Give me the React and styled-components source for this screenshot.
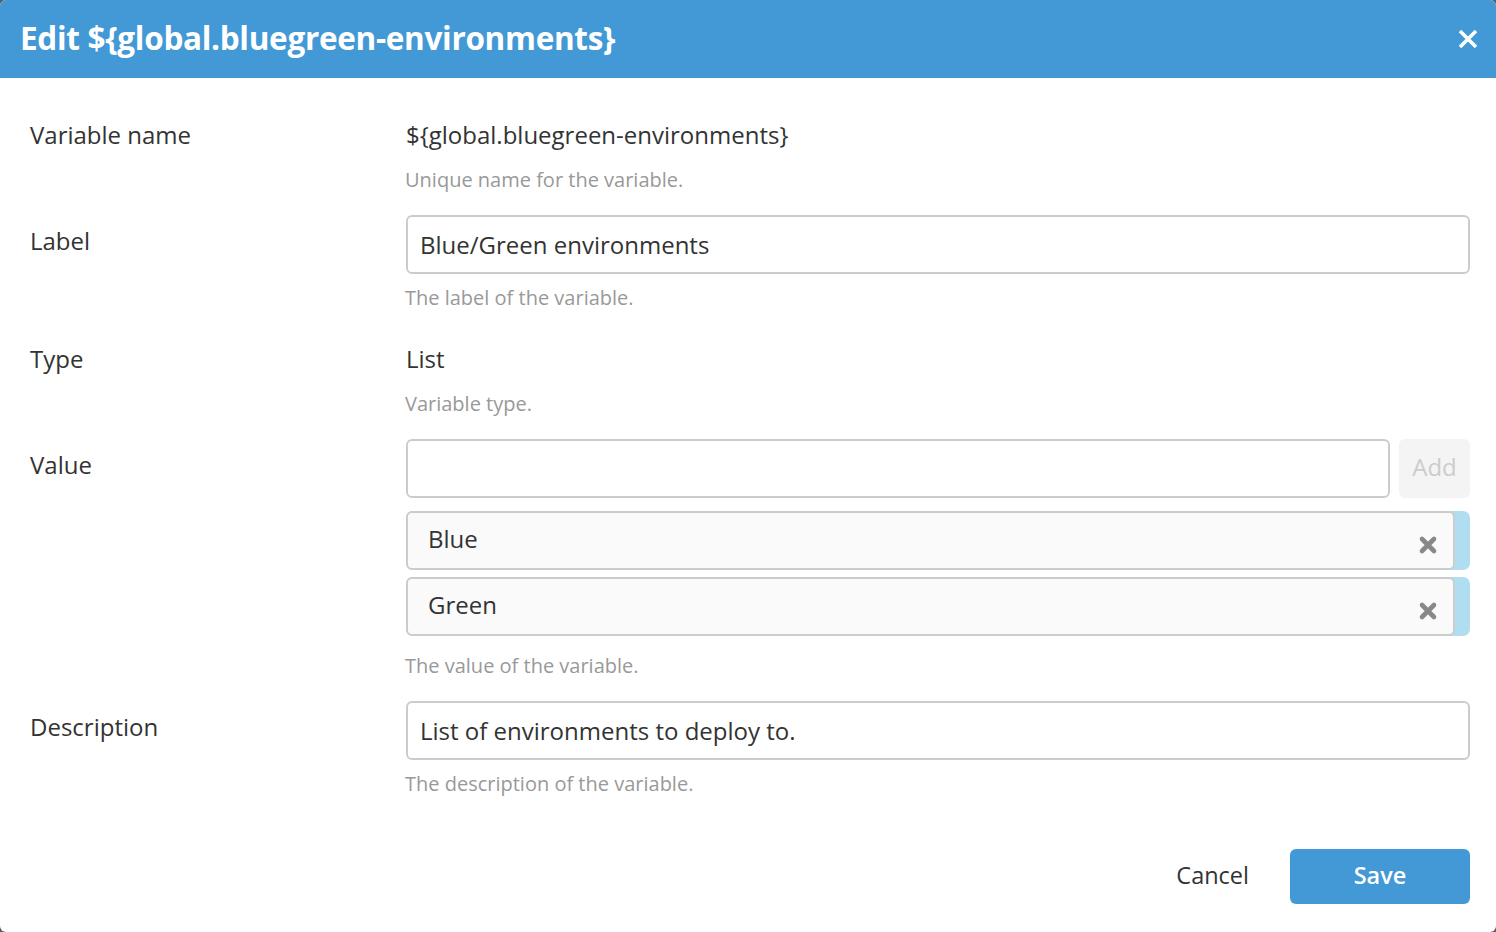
import React, { useState } from "react"
import styled, { createGlobalStyle } from "styled-components"

const GlobalStyle = createGlobalStyle`
  html, body {
    margin: 0;
    padding: 0;
    background: #5a5a5a;
  }
  body {
    font-family: "Open Sans", "Liberation Sans", sans-serif;
    color: #333;
  }
  * {
    box-sizing: border-box;
  }
`

const Modal = styled.div`
  width: 1496px;
  height: 932px;
  background: #fff;
  border-radius: 6px;
  overflow: hidden;
  display: flex;
  flex-direction: column;
`

const Header = styled.div`
  height: 78px;
  flex-shrink: 0;
  background: #4299d6;
  display: flex;
  align-items: center;
  justify-content: space-between;
  padding: 0 17px 2px 20px;

  h1 {
    margin: 0;
    color: #fff;
    font-size: 31.5px;
    font-weight: 700;
    letter-spacing: -0.3px;
    line-height: 1;
  }
`

const CloseButton = styled.button`
  border: none;
  background: none;
  padding: 0;
  margin-top: 2px;
  width: 22px;
  height: 22px;
  display: flex;
  align-items: center;
  justify-content: center;
  cursor: pointer;
`

const Body = styled.div`
  padding: 31px 26px 0 30px;
  display: flex;
  flex-direction: column;
  gap: 23px;
`

const Row = styled.div`
  display: grid;
  grid-template-columns: 376px 1fr;
`

const Label = styled.div`
  padding-top: 11px;
  font-size: 24px;
  line-height: 30px;
  color: #333;
`

const Field = styled.div`
  display: flex;
  flex-direction: column;
`

const Static = styled.div`
  padding-top: 11px;
  font-size: 24px;
  line-height: 30px;
  color: #333;
`

const Help = styled.div`
  margin-top: ${(p) => p.$gap || 12}px;
  font-size: 20px;
  line-height: 24px;
  color: #999;
  margin-left: -1px;
`

const Input = styled.input`
  width: 100%;
  height: 59px;
  border: 2px solid #ccc;
  border-radius: 6px;
  padding: 0 12px;
  font-family: inherit;
  font-size: 24px;
  color: #333;
  background: #fff;
  outline: none;
`

const AddRow = styled.div`
  display: flex;
  gap: 9px;
`

const AddButton = styled.button`
  width: 71px;
  height: 59px;
  flex-shrink: 0;
  border: none;
  border-radius: 6px;
  background: #f4f4f4;
  color: #ccc;
  font-family: inherit;
  font-size: 24px;
  padding: 0 0 4px;
`

const Items = styled.div`
  margin-top: 13px;
  display: flex;
  flex-direction: column;
  gap: 7px;
`

const ItemWrap = styled.div`
  background: #b1ddf0;
  border-radius: 7px;
  padding-right: 15px;
`

const Item = styled.div`
  height: 59px;
  border: 2px solid #ccc;
  border-radius: 6px;
  background: #fafafa;
  display: flex;
  align-items: center;
  justify-content: space-between;
  padding: 0 15px 4px 20px;
  font-size: 24px;
  color: #333;
`

const RemoveIcon = styled.svg`
  margin-top: 12px;
  flex-shrink: 0;
`

const Footer = styled.div`
  margin-top: 53px;
  padding-right: 26px;
  display: flex;
  justify-content: flex-end;
  align-items: center;
  gap: 41px;
`

const CancelButton = styled.button`
  border: none;
  background: none;
  padding: 0 0 4px;
  font-family: inherit;
  font-size: 23.5px;
  color: #333;
  cursor: pointer;
`

const SaveButton = styled.button`
  width: 180px;
  height: 55px;
  border: none;
  border-radius: 6px;
  background: #4299d6;
  color: #fff;
  font-family: inherit;
  font-size: 23.5px;
  font-weight: 600;
  padding: 0 0 4px;
  cursor: pointer;
`

function Remove() {
  return (
    <RemoveIcon width="20" height="20" viewBox="0 0 20 20">
      <path d="M4 4 L16 16 M16 4 L4 16" stroke="#888" strokeWidth="4.6" strokeLinecap="round" />
    </RemoveIcon>
  )
}

export default function App() {
  const [label, setLabel] = useState("Blue/Green environments")
  const [desc, setDesc] = useState("List of environments to deploy to.")
  const [values] = useState(["Blue", "Green"])

  return (
    <>
      <GlobalStyle />
      <Modal>
        <Header>
          <h1>{"Edit ${global.bluegreen-environments}"}</h1>
          <CloseButton>
            <svg width="22" height="22" viewBox="0 0 22 22">
              <path d="M3 3 L19 19 M19 3 L3 19" stroke="#fff" strokeWidth="3.6" />
            </svg>
          </CloseButton>
        </Header>
        <Body>
          <Row>
            <Label>Variable name</Label>
            <Field>
              <Static>{"${global.bluegreen-environments}"}</Static>
              <Help $gap={18}>Unique name for the variable.</Help>
            </Field>
          </Row>
          <Row>
            <Label>Label</Label>
            <Field>
              <Input value={label} onChange={(e) => setLabel(e.target.value)} />
              <Help>The label of the variable.</Help>
            </Field>
          </Row>
          <Row>
            <Label>Type</Label>
            <Field>
              <Static>List</Static>
              <Help $gap={18}>Variable type.</Help>
            </Field>
          </Row>
          <Row>
            <Label>Value</Label>
            <Field>
              <AddRow>
                <Input />
                <AddButton disabled>Add</AddButton>
              </AddRow>
              <Items>
                {values.map((v) => (
                  <ItemWrap key={v}>
                    <Item>
                      {v}
                      <Remove />
                    </Item>
                  </ItemWrap>
                ))}
              </Items>
              <Help $gap={18}>The value of the variable.</Help>
            </Field>
          </Row>
          <Row>
            <Label>Description</Label>
            <Field>
              <Input value={desc} onChange={(e) => setDesc(e.target.value)} />
              <Help>The description of the variable.</Help>
            </Field>
          </Row>
        </Body>
        <Footer>
          <CancelButton>Cancel</CancelButton>
          <SaveButton>Save</SaveButton>
        </Footer>
      </Modal>
    </>
  )
}
